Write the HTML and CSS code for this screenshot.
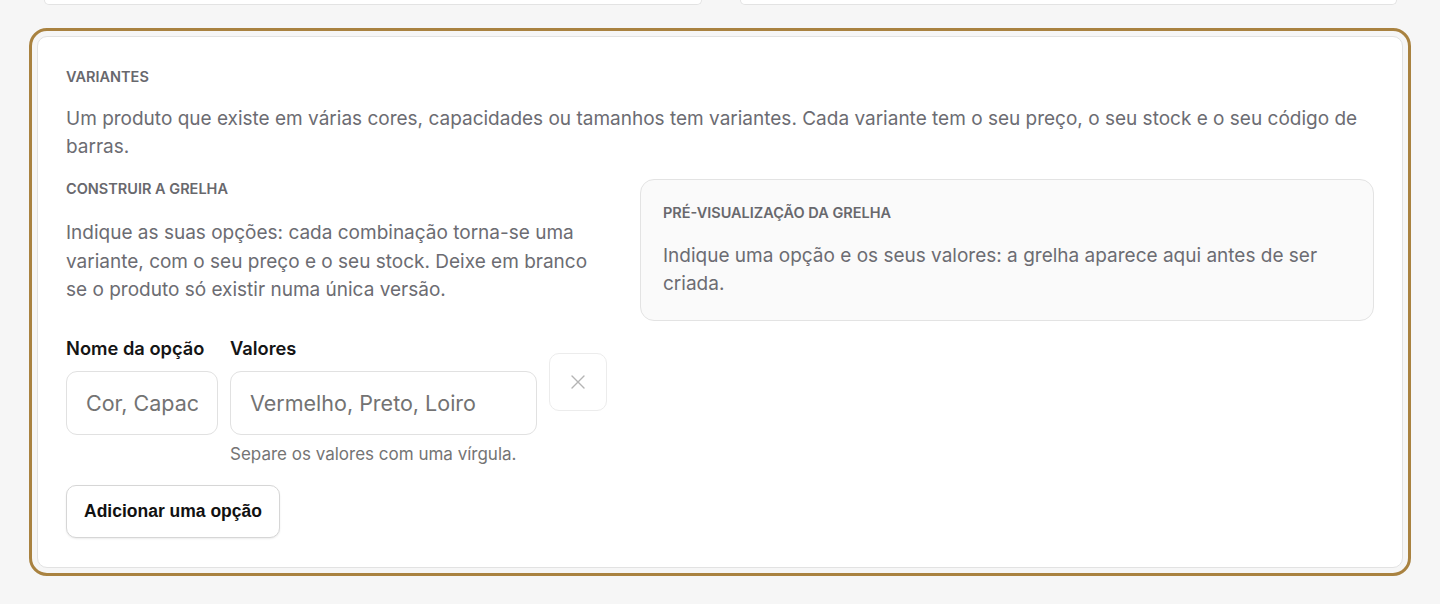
FILE: index.html
```html
<!DOCTYPE html>
<html lang="pt">
<head>
    <meta charset="UTF-8">
    <meta name="viewport" content="width=device-width, initial-scale=1.0">
    <title>Variantes</title>
    <link rel="stylesheet" href="styles.css">
</head>
<body>
    <div class="page">
        <div class="peek-row">
            <div class="peek-card"></div>
            <div class="peek-card"></div>
        </div>

        <section class="card card-focus">
            <h2 class="eyebrow">Variantes</h2>
            <p class="lead">Um produto que existe em várias cores, capacidades ou tamanhos tem variantes. Cada variante tem o seu preço, o seu stock e o seu código de barras.</p>

            <div class="variant-grid">
                <div class="builder">
                    <h3 class="eyebrow">Construir a grelha</h3>
                    <p class="text">Indique as suas opções: cada combinação torna-se uma variante, com o seu preço e o seu stock. Deixe em branco se o produto só existir numa única versão.</p>

                    <div class="option-row">
                        <div class="field field-name">
                            <label class="field-label" for="opt-name">Nome da opção</label>
                            <input class="input" id="opt-name" type="text" placeholder="Cor, Capacidade">
                        </div>
                        <div class="field field-values">
                            <label class="field-label" for="opt-values">Valores</label>
                            <input class="input" id="opt-values" type="text" placeholder="Vermelho, Preto, Loiro">
                            <span class="hint">Separe os valores com uma vírgula.</span>
                        </div>
                        <button class="remove-btn" type="button" aria-label="Remover">
                            <svg width="18" height="18" viewBox="0 0 18 18" fill="none" stroke="currentColor" stroke-width="1.4" stroke-linecap="round">
                                <path d="M3 3L15 15M15 3L3 15"/>
                            </svg>
                        </button>
                    </div>

                    <button class="add-btn" type="button">Adicionar uma opção</button>
                </div>

                <div class="preview">
                    <h3 class="eyebrow">Pré-visualização da grelha</h3>
                    <p class="text">Indique uma opção e os seus valores: a grelha aparece aqui antes de ser criada.</p>
                </div>
            </div>
        </section>
    </div>
</body>
</html>
```

FILE: styles.css
```css
* {
    margin: 0;
    padding: 0;
    box-sizing: border-box;
}

body {
    font-family: 'Inter', 'Noto Sans', sans-serif;
    background: #f6f6f6;
    color: #6c6c72;
}

.page {
    padding: 0 37px 40px;
}

.peek-row {
    display: grid;
    grid-template-columns: 1fr 1fr;
    gap: 38px;
    padding: 0 6px 0 7px;
}

.peek-card {
    height: 5px;
    background: #fff;
    border: 1px solid #e3e3e3;
    border-top: none;
    border-radius: 0 0 14px 14px;
}

.card {
    margin-top: 31px;
    background: #fff;
    border: 1px solid #e2e2e2;
    border-radius: 10px;
    padding: 31px 28px 29px;
}

.card-focus {
    outline: 3px solid #a98240;
    outline-offset: 5px;
}

.eyebrow {
    font-size: 14.5px;
    font-weight: 600;
    line-height: 17px;
    text-transform: uppercase;
    color: #68686d;
}

.lead {
    margin-top: 20px;
    font-size: 19px;
    line-height: 28px;
}

.text {
    margin-top: 20px;
    font-size: 19px;
    line-height: 28.5px;
}

.variant-grid {
    display: grid;
    grid-template-columns: 541px 1fr;
    gap: 33px;
    margin-top: 17px;
    align-items: start;
}

.builder .eyebrow {
    margin-top: 2px;
}

.builder .text {
    margin-top: 22px;
}

.option-row {
    display: flex;
    gap: 12px;
    margin-top: 32px;
    align-items: flex-start;
}

.field {
    display: flex;
    flex-direction: column;
}

.field-name {
    width: 152px;
}

.field-values {
    width: 307px;
}

.field-label {
    font-size: 18.3px;
    font-weight: 600;
    line-height: 22px;
    color: #151515;
    margin-bottom: 12px;
}

.input {
    width: 100%;
    height: 64px;
    border: 1px solid #e1e1e1;
    border-radius: 11px;
    padding: 0 19px;
    font-family: inherit;
    font-size: 21.5px;
    color: #222;
    background: #fff;
}

.input::placeholder {
    color: #737373;
}

.hint {
    margin-top: 9px;
    font-size: 17px;
    line-height: 20px;
    color: #747474;
}

.remove-btn {
    width: 58px;
    height: 58px;
    margin-top: 16px;
    border: 1px solid #ececec;
    border-radius: 10px;
    background: #fff;
    color: #b4b4b4;
    display: flex;
    align-items: center;
    justify-content: center;
}

.add-btn {
    margin-top: 21px;
    height: 53px;
    padding: 0 17px;
    border: 1px solid #d6d6d6;
    border-radius: 10px;
    background: #fff;
    font-family: 'Liberation Sans', Arial, sans-serif;
    font-size: 17.5px;
    font-weight: 700;
    color: #111;
    box-shadow: 0 1px 2px rgba(0, 0, 0, 0.08);
}

.preview {
    margin-top: 1px;
    background: #fafafa;
    border: 1px solid #e3e3e3;
    border-radius: 14px;
    padding: 24px 22px 22px;
}

.preview .text {
    margin-top: 21px;
    line-height: 28px;
}
```
